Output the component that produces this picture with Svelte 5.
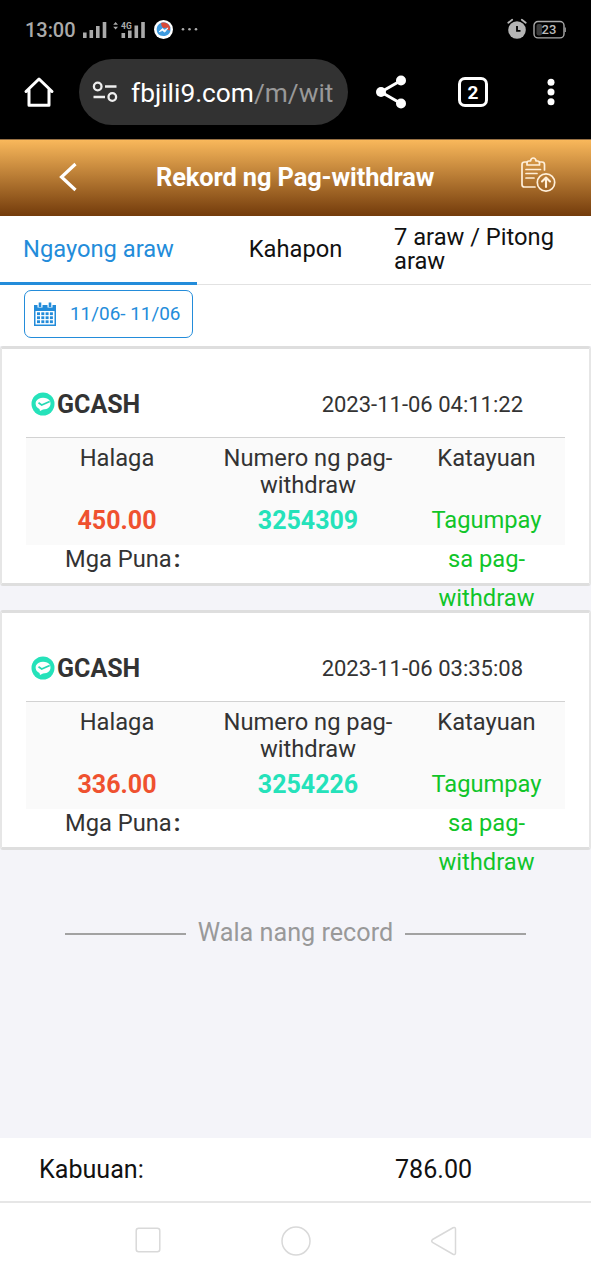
<script>
  const records = [
    { time: '2023-11-06 04:11:22', amount: '450.00', number: '3254309' },
    { time: '2023-11-06 03:35:08', amount: '336.00', number: '3254226' }
  ];
  const cells = [0, 1, 2, 3];
</script>

<div class="screen">
  <div class="status">
    <span class="clock">13:00</span>
    <svg class="signals" width="175" height="24" viewBox="0 0 175 24">
      <g fill="#aaa">
        <path d="M3 14.500h3.600v5.500H3zM9.500 12h3.600v8H9.500zM16 8h3.600v12H16zM22.700 4h3.600v16h-3.600z" />
        <path d="M41.500 15h3.600v5h-3.600zM48 12.500h3.600v7.500H48zM54.500 7.500h3.600V20h-3.600zM61.200 4h3.600v16h-3.600z" />
        <path d="M33.200 6.700 35.600 4 38 6.700zM33.200 8.700h4.800l-2.400 2.700z" />
        <circle cx="103" cy="11.300" r="1.300" /><circle cx="109.500" cy="11.300" r="1.300" /><circle cx="116" cy="11.300" r="1.300" />
      </g>
      <text x="41" y="10.800" class="network">4G</text>
      <circle cx="83.500" cy="11.500" r="9.500" fill="#fff" />
      <path d="M76.700 10.500a6.900 6.700 0 0 1 13.800 1c0 4-3 6.500-7 6.500-5 0-7-3-6.800-7.500z" fill="#3e9be0" />
      <path d="M81 5c4-1.500 8 .5 9.200 4.500l-.5 3-2-.5-1.500-2.500-3 .5-1.500-2z" fill="#d94a38" />
      <path d="m79 13.800 3.500-3.300 2.300 1.700 3.200-2.300-3.200 4.200-2.400-1.600z" fill="#fff" stroke="#fff" stroke-width=".8" />
    </svg>
    <svg class="alarm" width="22" height="22" viewBox="0 0 22 22">
      <circle cx="11" cy="12" r="8.800" fill="#b5b5b5" />
      <path d="M2.300 4.800 6.200 1.700M19.700 4.800 15.800 1.700" stroke="#b5b5b5" stroke-width="1.800" stroke-linecap="round" />
      <path d="M11 8v4.800h3.500" fill="none" stroke="#000" stroke-width="1.800" />
    </svg>
    <svg class="battery" width="34" height="20" viewBox="0 0 34 20">
      <rect x="1" y="1.500" width="30" height="16.400" rx="4" fill="none" stroke="#aaa" stroke-width="1.400" />
      <rect x="3.500" y="4" width="5.500" height="11.500" rx="2" fill="#3c3c3c" />
      <path d="M31.700 7.500h1.100v4.500h-1.100z" fill="#aaa" />
      <text x="16" y="14.200" class="charge">23</text>
    </svg>
  </div>

  <div class="browser">
    <svg class="home" width="32" height="32" viewBox="0 0 32 32" fill="none" stroke="#fff" stroke-width="3" stroke-linejoin="round" stroke-linecap="round">
      <path d="M3 15.500 16 3l13 12.500M6 13.500V29.200h20V13.500" />
    </svg>
    <div class="address">
      <svg width="26" height="22" viewBox="0 0 26 22" fill="none" stroke="#eee" stroke-width="2.300">
        <circle cx="5.700" cy="5.500" r="3.800" /><path d="M13 5.500h11.500M1.500 16H13" /><circle cx="20.300" cy="16" r="3.800" />
      </svg>
      <span class="url">fbjili9.com<span>/m/wit</span></span>
    </div>
    <svg class="share" width="32" height="34" viewBox="0 0 32 34">
      <path d="M26 5.500 6 17l20 11.500" fill="none" stroke="#fff" stroke-width="3" />
      <circle cx="26" cy="5.500" r="5" fill="#fff" /><circle cx="6" cy="17" r="5" fill="#fff" /><circle cx="26" cy="28.500" r="5" fill="#fff" />
    </svg>
    <div class="count">2</div>
    <svg class="more" width="8" height="28" viewBox="0 0 8 28" fill="#fff">
      <circle cx="4" cy="4.200" r="3.500" /><circle cx="4" cy="14" r="3.500" /><circle cx="4" cy="23.800" r="3.500" />
    </svg>
  </div>

  <header>
    <svg class="back" width="20" height="32" viewBox="0 0 20 32" fill="none" stroke="#fff" stroke-width="3.200"><path d="M17.500 3 3.500 16l14 13" /></svg>
    <h1>Rekord ng Pag-withdraw</h1>
    <svg class="report" width="36" height="36" viewBox="0 0 36 36" fill="none" stroke="#ffefd9" stroke-width="1.700" stroke-linecap="round" stroke-linejoin="round">
      <path d="M7 5H4.500Q2 5 2 7.500v20Q2 30 4.500 30H15M19.500 5H22Q24.500 5 24.500 7.500V13" />
      <path d="M7 8V6q0-2 2-2h1.500q.5-3 2.800-3t2.800 3h1.400q2 0 2 2v2zM6 12.500h14.500M6 16.500h11M6 21h8" />
      <circle cx="26" cy="25.500" r="8.700" /><path d="M26 30v-9M22 24.500l4-4 4 4" stroke-width="2.100" />
    </svg>
  </header>

  <nav>
    <div class="tab active">Ngayong araw</div>
    <div class="tab">Kahapon</div>
    <div class="tab week">7 araw / Pitong<br />araw</div>
  </nav>

  <div class="filter">
    <div class="dates">
      <svg width="22" height="24" viewBox="0 0 22 24">
        <path d="M0 3h22v21H0z" fill="#238cda" />
        <path d="M1.500 9h19v13.500h-19z" fill="#fff" />
        <path d="M3.500 0h5v5.500h-5zM13.500 0h5v5.500h-5z" fill="#fff" />
        <path d="M4.700.5h2.600v4.500H4.700zM14.700.5h2.600v4.500h-2.600z" fill="#238cda" />
        {#each cells as column}
          {#each cells.slice(0, 3) as row}
            <rect x={3 + column * 4.3} y={10.3 + row * 4} width="3" height="2.800" fill="#238cda" />
          {/each}
        {/each}
      </svg>
      <span>11/06- 11/06</span>
    </div>
  </div>

  <main>
    {#each records as record}
      <article>
        <div class="top">
          <svg width="24" height="24" viewBox="0 0 24 24">
            <circle cx="12" cy="12" r="11.500" fill="#25e2ba" />
            <path d="M5 9.500C7 4.800 16 4.300 19 9c2 5-2 8.500-7 8.500l-3 1.500-.5-2C5 15.500 4 12 5 9.500z" fill="#fff" />
            <path d="m7.500 10.800 3.200 2.200 8-3.500" fill="none" stroke="#25d9b4" stroke-width="1.700" />
          </svg>
          <strong>GCASH</strong>
          <time>{record.time}</time>
        </div>
        <div class="details">
          <div class="cell"><div class="label">Halaga</div><div class="value amount">{record.amount}</div></div>
          <div class="cell"><div class="label">Numero ng pag-<br />withdraw</div><div class="value number">{record.number}</div></div>
          <div class="cell"><div class="label">Katayuan</div><div class="value state">Tagumpay<br />sa pag-<br />withdraw</div></div>
        </div>
        <div class="notes">Mga Puna<span>:</span></div>
      </article>
    {/each}
    <div class="end"><i></i><span>Wala nang record</span><i></i></div>
  </main>

  <footer><span class="total">Kabuuan:</span><span class="sum">786.00</span></footer>

  <div class="keys">
    <svg width="28" height="30" viewBox="0 0 28 30"><rect x="2.200" y="3.200" width="23.600" height="23.600" rx="2.500" /></svg>
    <svg width="32" height="32" viewBox="0 0 32 32"><circle cx="16" cy="16" r="14" /></svg>
    <svg width="28" height="32" viewBox="0 0 28 32"><path d="M2.500 14.500 23 2.800q2.500-1 2.500 1.200v24q0 2.200-2.500 1.200L2.500 17.500Q1 16 2.500 14.500z" /></svg>
  </div>
</div>

<style>
  :global(body) { margin: 0; }
  * { box-sizing: border-box; }
  svg { display: block; flex: none; }
  .screen { width: 591px; height: 1280px; overflow: hidden; display: flex; flex-direction: column; background: #fff; color: #333; font-family: Roboto, sans-serif; font-size: 23.700px; }
  .status { height: 59px; flex: none; display: flex; align-items: center; padding: 1px 24px 0 25px; background: #000; color: #aaa; }
  .clock { width: 55px; font-size: 20px; font-weight: 500; letter-spacing: -.05px; white-space: nowrap; }
  .network { font: bold 8.500px Roboto, sans-serif; fill: #aaa; }
  .signals { margin-top: -1px; }
  .alarm { margin-left: auto; margin-top: -2px; }
  .battery { margin-left: 5px; margin-top: -1px; }
  .charge { font: 500 13px Roboto, sans-serif; fill: #bbb; text-anchor: middle; }
  .browser { height: 80px; flex: none; display: flex; align-items: flex-start; background: #000; color: #fff; padding-left: 23px; }
  .home { margin-top: 17px; }
  .address { margin-left: 24px; width: 269px; height: 66px; border-radius: 33px; background: #323232; display: flex; align-items: center; padding-left: 13px; }
  .url { margin: 1px 0 0 13px; font-size: 26.300px; white-space: nowrap; }
  .url span { color: #999; }
  .share { margin: 16px 0 0 27px; }
  .count { margin: 18px 0 0 51px; width: 30px; height: 30px; border: 3px solid #fff; border-radius: 7px; text-align: center; line-height: 25px; font-size: 19px; font-weight: 700; }
  .more { margin: 19px 0 0 59px; }
  header { height: 77px; flex: none; display: flex; align-items: center; background: linear-gradient(#f9b85b, #733b0b); color: #fff; border-top: 1px solid #977044; padding: 0 35px 0 58px; }
  .back { margin-top: -3px; }
  h1 { margin: -3px auto 0 78px; font-size: 25.400px; font-weight: 700; letter-spacing: -.1px; white-space: nowrap; }
  .report { margin-top: -7px; }
  nav { height: 70px; flex: none; display: grid; grid-template-columns: 197px 197px 197px; color: #111; background: linear-gradient(#e2e2e2, #e2e2e2) 0 68px / 100% 1px no-repeat; }
  .tab { display: flex; align-items: center; justify-content: center; line-height: 24px; border-bottom: 4px solid transparent; white-space: nowrap; }
  .active { color: #238cda; border-bottom: 3px solid #238cda; height: 69px; }
  .week { justify-content: flex-start; }
  .filter { height: 60px; flex: none; padding: 4px 24px; }
  .dates { width: 169px; height: 48px; border: 1.500px solid #238cda; border-radius: 7px; display: flex; align-items: center; padding-left: 9px; color: #238cda; font-size: 18.900px; white-space: nowrap; }
  .dates span { margin-left: 14px; margin-top: -1px; }
  main { height: 792px; flex: none; background: #f4f4f9; display: flex; flex-direction: column; gap: 24px; }
  article { height: 240px; flex: none; background: #fff; border: 3px solid #dedede; border-left: 2px solid #e6e6e6; border-right: 2px solid #e6e6e6; border-radius: 3px; padding: 0 24px; }
  .top { height: 89px; border-bottom: 1.500px solid #d2d2d2; display: flex; align-items: center; padding: 22px 42px 0 5px; white-space: nowrap; }
  .top strong { margin-left: 2px; font-size: 25px; }
  time { margin-left: auto; font-size: 22px; }
  .details { height: 107px; background: #fafafa; display: grid; grid-template-columns: 182px 200px 157px; text-align: center; }
  .label { height: 62px; padding-top: 7px; line-height: 27px; white-space: nowrap; }
  .value { height: 39px; line-height: 39px; padding-top: 1px; white-space: nowrap; position: relative; }
  .amount { color: #ef512f; font-weight: 700; font-size: 25px; }
  .number { color: #25e2ba; font-weight: 700; font-size: 25px; }
  .state { color: #10c529; z-index: 1; }
  .notes { padding-left: 39px; line-height: 28px; }
  .notes span { margin-left: 2px; font-weight: 700; }
  .end { display: flex; align-items: center; justify-content: center; margin-top: 42px; color: #999; height: 32px; white-space: nowrap; }
  .end i { width: 121px; height: 2px; background: #a2a2a2; margin-top: 3px; }
  .end span { margin: 0 12px; font-size: 25.200px; }
  footer { height: 65px; flex: none; border-bottom: 2px solid #e6e6e6; display: flex; align-items: center; color: #111; font-size: 25.100px; }
  .total { width: 356px; margin-left: 39px; }
  .keys { flex: 1; display: flex; align-items: flex-start; justify-content: center; gap: 118px; padding-top: 22px; }
  .keys svg { fill: none; stroke: #d9d9d9; stroke-width: 1.500; }
</style>
